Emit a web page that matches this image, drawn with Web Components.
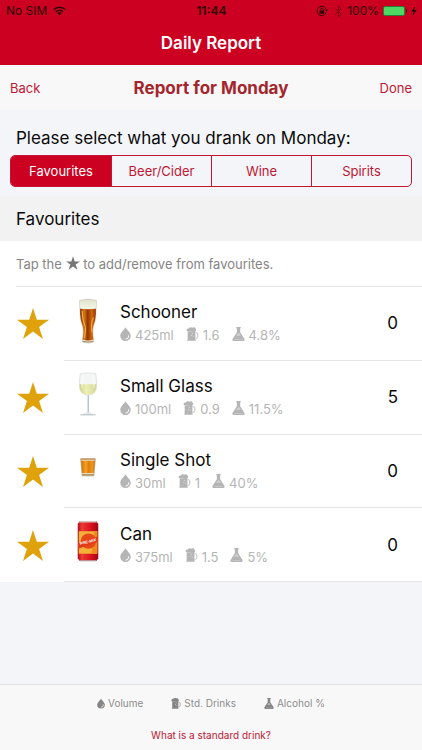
<!DOCTYPE html>
<html lang="en">
<head>
<meta charset="utf-8">
<meta name="viewport" content="width=device-width, initial-scale=1">
<title>Daily Report</title>
<style>
  :root { --red: #cc0020; --link: #c01734; --line: #e6e6e8; }
  html, body { height: 100%; }
  body { margin: 0; background: #f4f5f8; color: #0a0a0a; font-family: Inter, "Liberation Sans", sans-serif; }
</style>
</head>
<body>
<report-app></report-app>

<script>
const ICONS = {
  wifi: ['0 0 24 18', '<g fill="none" stroke="currentColor" stroke-width="2.8"><path d="M1.5 6.5a15 15 0 0 1 21 0"/><path d="M5.3 10.5a9.6 9.6 0 0 1 13.4 0"/></g><path d="M12 17.5 7.8 13a6 6 0 0 1 8.4 0Z"/>'],
  lock: ['0 0 24 24', '<path d="M20.6 14.5A9.4 9.4 0 1 1 20.8 10" fill="none" stroke="currentColor" stroke-width="1.8"/><path d="m18.3 9.7 5.2-.4-2.4 4Z"/><rect x="7" y="11" width="9.400" height="6.500" rx=".8"/><path d="M9 11.500V9.200a2.700 2.700 0 0 1 5.400 0v2.300" fill="none" stroke="currentColor" stroke-width="1.8"/>'],
  bluetooth: ['0 0 16 24', '<path d="m2 6.500 11 10.500-5 5V2l5 5L2 17.500" fill="none" stroke="currentColor" stroke-width="1.8"/>'],
  bolt: ['0 0 10 16', '<path d="M6.800 0 .5 9h3.600L2.800 16 9.500 6.500H5.800Z"/>'],
  star: ['0 0 32 31', '<path d="m16 0 3.800 11.800H32l-9.900 7.200L26 31l-10-7.400L6 31l3.900-12L0 11.800h12.200Z"/>'],
  drop: ['0 0 22 28', '<path d="M11 0c1 4.500 10.500 10.500 10.500 17.500a10.500 10.300 0 0 1-21 0C.5 10.500 10 4.500 11 0Z"/><path d="M17.300 17.500c.4 3.800-1.900 6.300-5.300 6.600" fill="none" stroke="#fff" stroke-width="2" stroke-linecap="round"/>'],
  beer: ['0 0 25 29', '<path d="M1 8.500C-.8 5 2 2.300 5 3c1-3 5.500-3.500 7.500-1.500C15.500-.5 18.500 1 18.700 3.500c2 1.500 1.800 4 .3 5Z"/><path d="M2.500 8h16v17.500l1 3H1.500l1-3Z"/><path d="M19 12h2.500q2 0 2 2v6.500q0 2-4.500 3.500" fill="none" stroke="currentColor" stroke-width="1.700"/><g fill="#fff"><circle cx="13" cy="13" r="1"/><circle cx="11" cy="17" r="1"/><circle cx="14" cy="19" r=".8"/><path d="M2.500 9.300h9v.8h-9z" opacity=".6"/></g>'],
  flask: ['0 0 26 28', '<path d="M8.500 0h9v2.500h-1.200v8L25 24c1 2-.2 4-2.500 4h-19C1.200 28 0 26 1 24l8.700-13.500v-8H8.500Z"/><path d="m11.700 12.500-3.300 5.200h9.200l-3.300-5.200Z" fill="#fff" opacity=".4"/><path d="M5 25h16" stroke="#fff" opacity=".5"/>']
};

const DRINKS = {
  schooner: '<defs><linearGradient id="b"><stop stop-color="#7d2a05"/><stop offset=".25" stop-color="#dc780f"/><stop offset=".48" stop-color="#8c3505"/><stop offset=".75" stop-color="#d8690b"/><stop offset="1" stop-color="#8c3205"/></linearGradient><linearGradient id="f" x2="0" y2="1"><stop stop-color="#dce5cb"/><stop offset="1" stop-color="#f7f7e9"/></linearGradient></defs><path d="M11.500 2.500Q20 0 28.500 2.500L28 17q-.3 7-2.500 12-1.500 5 .3 15 0 2-5.800 2t-5.800-2q1.800-10 .3-15Q12.300 24 12 17Z" fill="#eee5cd" stroke="#b7a587" stroke-width=".5"/><path d="M12 10h16v6q-.3 7-2.700 13-1.300 5 .2 13.500-5.500 2-11 0Q16 34 14.700 29 12.300 23 12 16Z" fill="url(#b)"/><path d="M11.700 3Q20 1 28.300 3L28 11q-8 1-16 0Z" fill="url(#f)"/><path d="M14 13q0 10 3.500 17-.2 6-1 11" fill="none" stroke="#f5b64a" stroke-width="1"/><path d="M25.500 20q-3 7-1.500 15" fill="none" stroke="#f4a337" stroke-width="1.200"/><path d="M14.500 44.300q5.500 1.400 11 0" fill="none" stroke="#82663e" stroke-width=".7"/>',
  wine: '<defs><linearGradient id="w"><stop stop-color="#d0d391"/><stop offset=".4" stop-color="#edf0b5"/><stop offset="1" stop-color="#d4d89a"/></linearGradient></defs><path d="M12.200 1.500Q20 .5 27.800 1.500q1.800 9 .7 15.500-2 5.500-7 6.500h-3q-5-1-7-6.500-1-6.500.7-15.500Z" fill="#f4f6f5" stroke="#d4dad9" stroke-width=".7"/><path d="M11.400 12.500h17.200q.4 7-3 9.500Q20 25 14.400 22q-3.400-2.500-3-9.500Z" fill="url(#w)"/><path d="M14 4v12M26 4v12" stroke="#fff" opacity=".7"/><path d="M19 23h2v18q1.500 1.800 7 2.500v.8H12v-.8q5.500-.7 7-2.500Z" fill="#dce2e5"/><path d="M20.500 24v17M12.500 43.800h15" stroke="#aebac1" stroke-width=".8"/>',
  shot: '<defs><linearGradient id="s"><stop stop-color="#cc6f0a"/><stop offset=".35" stop-color="#f5a323"/><stop offset=".55" stop-color="#df7b10"/><stop offset=".8" stop-color="#ef9a20"/><stop offset="1" stop-color="#c36c10"/></linearGradient></defs><path d="M12.500 14h15L26 31.500H14Z" fill="#ebddbd" stroke="#ac824b" stroke-width=".6"/><path d="M12.900 16h14.200l-1.200 12.500H14.100Z" fill="url(#s)"/><path d="M12.800 14.500h14.400" stroke="#bd8951"/><path d="M14.200 30.500h11.600" stroke="#8e7743"/>',
  can: '<defs><linearGradient id="c"><stop stop-color="#a90b18"/><stop offset=".2" stop-color="#ee3934"/><stop offset=".7" stop-color="#d60c1b"/><stop offset="1" stop-color="#990817"/></linearGradient></defs><path d="M11.500 2h17L30.500 5v35L28.500 43h-17L9.500 40V5Z" fill="url(#c)"/><path d="M11.500 2h17l.8 1.600H10.700Z" fill="#d6bec2"/><path d="M11.500 42h17l-.6 1.300H12.100Z" fill="#b89096"/><path d="M10.500 12.500h19v23h-19Z" fill="#f3b139"/><path d="M26.500 12.500h3v23h-6Z" fill="#f08b20"/><circle cx="20.500" cy="22.500" r="7.800" fill="#e64818"/><path d="m10 25 20-7v5.500l-20 7Z" fill="#e33a18"/>'
};

function define(name, render) {
  customElements.define(name, class extends HTMLElement {
    connectedCallback() {
      if (this.shadowRoot) return;
      const t = document.createElement('template');
      t.innerHTML = render(this);
      this.attachShadow({ mode: 'open' }).append(t.content.cloneNode(true));
    }
  });
}

define('glyph-icon', el => {
  const [box, body] = ICONS[el.getAttribute('name')];
  return `<style>:host{display:inline-block;width:12px;height:12px;flex:none}svg{display:block;width:100%;height:100%}</style>
  <svg viewBox="${box}" fill="currentColor" aria-hidden="true">${body}</svg>`;
});

define('status-bar', () => `<style>
  :host{display:grid;grid-template-columns:1fr auto 1fr;align-items:center;height:20px;padding:1px 5px 0 6px;box-sizing:border-box;background:var(--red);color:#2c0508;font-size:12px;line-height:20px}
  .side{display:flex;align-items:center;gap:6px}
  .end{justify-content:flex-end;gap:4px}
  b{font-weight:600}
  .battery{display:flex;align-items:center;gap:1px}
  .cell{width:20px;height:8px;background:#4cd964;border:1px solid #2c7a35;border-radius:2px;box-sizing:content-box}
  .tip{width:1px;height:4px;border-radius:0 2px 2px 0;background:#3a0a0c}
  .wifi{width:13px;height:10px}
  .bt{width:9px;height:13px;opacity:.5}
  .bolt{width:6px;height:10px}
  .lock{margin-right:2px}
</style>
<div class="side"><span>No SIM</span><glyph-icon class="wifi" name="wifi"></glyph-icon></div>
<b>11:44</b>
<div class="side end"><glyph-icon class="lock" name="lock"></glyph-icon><glyph-icon class="bt" name="bluetooth"></glyph-icon><span>100%</span><span class="battery"><span class="cell"></span><span class="tip"></span></span><glyph-icon class="bolt" name="bolt"></glyph-icon></div>`);

define('title-bar', () => `<style>
  :host{display:block;background:var(--red);color:#fff;text-align:center}
  h1{margin:0;padding-top:1px;font-size:17px;line-height:44px;font-weight:600}
</style><h1><slot></slot></h1>`);

define('report-toolbar', () => `<style>
  :host{display:grid;grid-template-columns:1fr auto 1fr;align-items:center;height:45px;padding:0 10px;background:#f8f8f8}
  h2{margin:0;font-size:17px;font-weight:700;color:#a4262c}
  button{all:unset;cursor:pointer;color:var(--link);font-size:13px;justify-self:start}
  button:last-child{justify-self:end}
</style><button type="button">Back</button><h2><slot></slot></h2><button type="button">Done</button>`);

define('category-picker', el => `<style>
  :host{display:block;padding:17px 10px 9px}
  p{margin:0 6px 6px;font-size:17px;line-height:22px}
  .tabs{display:grid;grid-template-columns:repeat(4,1fr);border:1px solid var(--link);border-radius:5px;overflow:hidden}
  button{margin:0;padding:0;border:0;background:none;font:13px/30px Inter,"Liberation Sans",sans-serif;color:var(--link);cursor:pointer}
  button+button{border-left:1px solid var(--link)}
  button[aria-pressed=true]{background:var(--red);color:#fff}
</style><p id="q"><slot></slot></p>
<div class="tabs" role="group" aria-labelledby="q">${el.getAttribute('options').split(',').map((o, i) => `<button type="button" aria-pressed="${i === 0}">${o}</button>`).join('')}</div>`);

define('section-heading', () => `<style>
  :host{display:block;background:#f2f2f2;padding:2px 16px 0}
  h3{margin:0;font-size:17px;font-weight:400;line-height:43px}
</style><h3><slot></slot></h3>`);

define('favourite-hint', () => `<style>
  :host{display:block;background:#fff;padding-left:16px}
  p{margin:0;font-size:13px;line-height:43px;padding-top:2px;color:#858585;border-bottom:1px solid var(--line)}
  glyph-icon{width:14px;height:14px;vertical-align:-1px;color:#777}
</style><p>Tap the <glyph-icon name="star"></glyph-icon> to add/remove from favourites.</p>`);

define('drink-list', () => `<style>
  :host{display:grid;grid-auto-rows:1fr;min-height:295px;background:#fff}
</style><slot></slot>`);

define('drink-row', el => {
  const a = n => el.getAttribute(n);
  return `<style>
  :host{display:grid;grid-template-columns:64px 1fr}
  .star{all:unset;cursor:pointer;display:grid;place-items:center;color:#e0a20a;padding-left:2px}
  .star glyph-icon{width:32px;height:31px}
  .main{display:grid;grid-template-columns:48px 1fr auto;align-items:center;column-gap:8px;padding-right:24px;border-bottom:1px solid var(--line)}
  .art{position:relative}
  .art svg{display:block;width:48px;height:45px;margin-bottom:6px;overflow:visible}
  .label{position:absolute;left:0;width:48px;top:20px;font:italic 900 4px/6px "Liberation Sans",sans-serif;color:#fff;text-align:center;transform:rotate(-14deg);white-space:nowrap}
  h4{margin:0;font-size:17px;font-weight:400;line-height:24px}
  .stats{display:flex;gap:12px;font-size:13px;line-height:22px;color:#b5b5b5}
  .stats span{display:flex;align-items:center;gap:4px}
  .stats glyph-icon{width:13px;height:14px;margin-top:-3px}
  .stats glyph-icon[name=drop]{width:11px}
  output{font-size:17px}
  </style>
  <button class="star" type="button" aria-label="Remove ${a('name')} from favourites"><glyph-icon name="star"></glyph-icon></button>
  <div class="main">
    <div class="art"><svg viewBox="0 0 40 46" aria-hidden="true">${DRINKS[a('art')]}</svg>${a('brand') ? `<span class="label">${a('brand')}</span>` : ''}</div>
    <div><h4>${a('name')}</h4><div class="stats"><span><glyph-icon name="drop"></glyph-icon>${a('volume')}</span><span><glyph-icon name="beer"></glyph-icon>${a('std')}</span><span><glyph-icon name="flask"></glyph-icon>${a('alcohol')}</span></div></div>
    <output>${a('count')}</output>
  </div>`;
});

define('legend-footer', () => `<style>
  :host{display:block;margin-top:auto;background:#f8f8f8;border-top:1px solid #e2e3e6;padding:8px 0 5px;text-align:center;font-size:10px}
  .key{display:flex;justify-content:center;gap:28px;color:#8d8d8d;line-height:20px}
  .key span{display:flex;align-items:center;gap:3px}
  glyph-icon{width:10px;height:11px;color:#858585}
  glyph-icon[name=drop]{width:8px}
  a{display:block;width:fit-content;margin:12px auto 0;line-height:20px;color:var(--link);text-decoration:none}
</style>
<div class="key"><span><glyph-icon name="drop"></glyph-icon>Volume</span><span><glyph-icon name="beer"></glyph-icon>Std. Drinks</span><span><glyph-icon name="flask"></glyph-icon>Alcohol %</span></div>
<a href="#standard-drink">What is a standard drink?</a>`);

define('report-app', () => `<style>
  :host{display:flex;flex-direction:column;min-height:100%}
</style>
<status-bar></status-bar>
<title-bar>Daily Report</title-bar>
<report-toolbar>Report for Monday</report-toolbar>
<category-picker options="Favourites,Beer/Cider,Wine,Spirits">Please select what you drank on Monday:</category-picker>
<section-heading>Favourites</section-heading>
<favourite-hint></favourite-hint>
<drink-list>
  <drink-row art="schooner" name="Schooner" volume="425ml" std="1.6" alcohol="4.8%" count="0"></drink-row>
  <drink-row art="wine" name="Small Glass" volume="100ml" std="0.9" alcohol="11.5%" count="5"></drink-row>
  <drink-row art="shot" name="Single Shot" volume="30ml" std="1" alcohol="40%" count="0"></drink-row>
  <drink-row art="can" brand="PRE-MIX" name="Can" volume="375ml" std="1.5" alcohol="5%" count="0"></drink-row>
</drink-list>
<legend-footer></legend-footer>`);
</script>
</body>
</html>
